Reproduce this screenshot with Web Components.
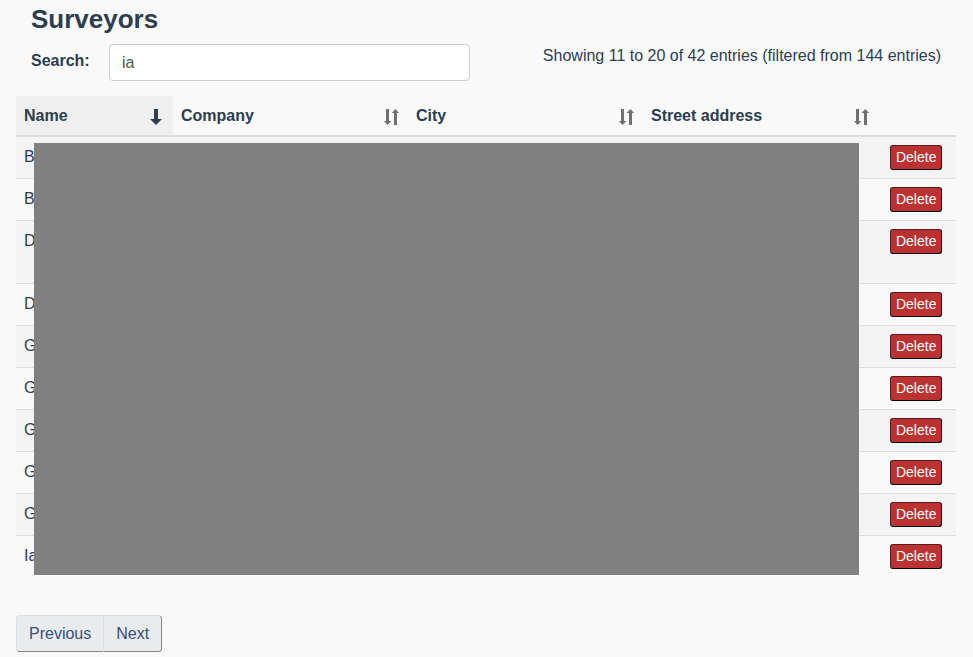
<!DOCTYPE html>
<html lang="en">
<head>
<meta charset="utf-8">
<title>Surveyors</title>
<style>
body { margin: 0; background: #f9f9f9; color: #2c3e50; font: 16px/24px "Liberation Sans", Arial, sans-serif; }
</style>
</head>
<body>
<surveyors-page></surveyors-page>
<script>
const define = (name, html, setup) => {
  const template = document.createElement('template');
  template.innerHTML = html;
  customElements.define(name, class extends HTMLElement {
    constructor() {
      super();
      this.attachShadow({ mode: 'open' }).append(template.content.cloneNode(true));
    }
    connectedCallback() { if (setup) setup(this, this.shadowRoot); }
  });
};

define('search-bar', `
<style>
:host { display: grid; grid-template-columns: 78px 361fr 471fr; padding: 0 15px; }
label { font-weight: bold; padding-top: 5px; }
input { box-sizing: border-box; width: 100%; height: 37px; padding: 0 12px; border: 1px solid #ccc; border-radius: 4px; background: #fff; color: #555; font: inherit; outline: none; }
p { margin: 0; text-align: right; white-space: nowrap; }
</style>
<label for="query">Search:</label>
<input id="query" type="text" value="ia">
<p><slot></slot></p>`);

define('sort-header', `
<style>
:host { display: block; }
button { display: flex; align-items: center; justify-content: space-between; width: 100%; padding: 0; border: 0; background: none; color: inherit; font: inherit; font-weight: bold; text-align: left; cursor: pointer; }
svg { flex: none; margin: 1px 1px 0 0; }
.down { display: none; margin-right: 3px; }
:host([sorted]) .down { display: block; }
:host([sorted]) .both { display: none; }
</style>
<button type="button"><slot></slot>
<svg class="down" width="12" height="16" viewBox="0 0 12 16" fill="#2c3e50" aria-hidden="true"><path d="M4 0h4v10h4L6 16 0 10h4z"/></svg>
<svg class="both" width="15" height="16" viewBox="0 0 15 16" fill="#707070" aria-hidden="true"><path d="M2 0h3v12h2.500L3.500 16 0 12h2zM10 16h3V4h2L11.500 0 7.500 4H10z"/></svg>
</button>`);

define('delete-button', `
<style>
:host { display: block; }
button { display: block; box-sizing: border-box; height: 25px; padding: 0 5px; border: 1px solid; border-color: #5e1919 #000 #000 #5e1919; border-radius: 3px; background: #bb3232; color: #fff; font: 14px/21px "Liberation Sans", Arial, sans-serif; cursor: pointer; }
</style>
<button type="button"><slot></slot></button>`);

define('surveyor-table', `
<style>
:host { display: block; position: relative; }
table { width: 100%; border-collapse: separate; border-spacing: 0; table-layout: fixed; }
.name { width: 16.7%; } .wide { width: 25%; }
th { height: 41px; box-sizing: border-box; padding: 8px 8px 7px; text-align: left; border-bottom: 2px solid #ddd; }
th[aria-sort] { background: #efefef; }
td { box-sizing: border-box; height: 42px; padding: 8px 8px 7px; vertical-align: top; border-top: 1px solid #ddd; }
tbody tr:first-child td { border-top: 0; height: 41px; }
tbody tr:nth-child(odd) { background: #f4f4f4; }
tbody tr.tall td { height: 63px; }
td:last-child { padding-left: 12px; }
.cover { position: absolute; inset: 47px 97px 2px 18px; background: #808080; }
</style>
<table>
<colgroup><col class="name"><col class="wide"><col class="wide"><col class="wide"><col></colgroup>
<thead><tr>
<th aria-sort="descending"><sort-header sorted>Name</sort-header></th>
<th><sort-header>Company</sort-header></th>
<th><sort-header>City</sort-header></th>
<th><sort-header>Street address</sort-header></th>
<th></th>
</tr></thead>
<tbody></tbody>
</table>
<div class="cover"></div>`, (host, root) => {
  const tall = 2;
  root.querySelector('tbody').innerHTML = host.getAttribute('names').split(',').map((name, i) =>
    `<tr${i === tall ? ' class="tall"' : ''}><td>${name}</td><td></td><td></td><td></td><td><delete-button>Delete</delete-button></td></tr>`).join('');
});

define('page-buttons', `
<style>
:host { display: flex; }
button { box-sizing: border-box; height: 37px; padding: 0 12px; border: 1px solid; border-color: #dcdfe2 #888 #888 #dcdfe2; background: #e9ebed; color: #34507d; font: inherit; cursor: pointer; }
button:first-of-type { border-right: 0; border-radius: 4px 0 0 4px; }
button:last-of-type { border-radius: 0 4px 4px 0; }
</style>
<button type="button">Previous</button><button type="button">Next</button>`);

define('surveyors-page', `
<style>
:host { display: block; padding: 3px 17px 5px 16px; }
h1 { margin: 0 0 9px; padding: 0 15px; font-size: 26px; line-height: 32px; }
surveyor-table { margin: 15px 0 38px; }
</style>
<h1>Surveyors</h1>
<search-bar>Showing 11 to 20 of 42 entries (filtered from 144 entries)</search-bar>
<surveyor-table names="B,B,D,D,G,G,G,G,G,Ia"></surveyor-table>
<page-buttons></page-buttons>`);
</script>
</body>
</html>
